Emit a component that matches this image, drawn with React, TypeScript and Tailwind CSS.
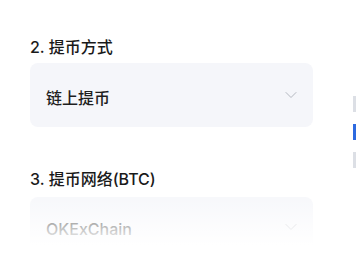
import { ChevronDown } from 'lucide-react';

function Select({ value, textClass, chevronClass }: { value: string; textClass: string; chevronClass: string }) {
  return (
    <div className="flex h-[64px] shrink-0 items-center justify-between rounded-[8px] bg-[#f5f6fa] pl-4 pr-[12px]">
      <span className={`text-[16px] font-medium text-[#1e1e1e] ${textClass}`}>{value}</span>
      <ChevronDown size={20} strokeWidth={1.2} className={`text-[#b4b8c0] ${chevronClass}`} />
    </div>
  );
}

export default function App() {
  return (
    <div
      className="relative flex h-[253px] w-[363px] items-start overflow-hidden bg-white"
      style={{ fontFamily: 'Inter, "Noto Sans CJK SC", sans-serif' }}
    >
      <div className="ml-[30px] flex w-[283px] shrink-0 flex-col pt-[35px]">
        <h3 className="mb-[4px] h-6 text-[16px] font-medium leading-6 text-[#1a1a1a]">2. 提币方式</h3>
        <Select value="链上提币" textClass="mt-[6px]" chevronClass="" />
        <h3 className="mb-[6px] mt-[40px] h-6 text-[16px] font-medium leading-6 text-[#1a1a1a]">
          3. 提币网络(BTC)
        </h3>
        <Select value="OKExChain" textClass="" chevronClass="-mt-[4px]" />
      </div>

      <div className="ml-[40px] mt-[96px] flex flex-col gap-3">
        <div className="h-4 w-[3px] bg-[#dcdfe5]" />
        <div className="h-4 w-[3px] bg-[#2d6ae0]" />
        <div className="h-4 w-[3px] bg-[#dcdfe5]" />
      </div>

      <div className="pointer-events-none absolute inset-x-0 bottom-0 h-[68px] bg-gradient-to-b from-white/0 to-white to-[88%]" />
    </div>
  );
}
